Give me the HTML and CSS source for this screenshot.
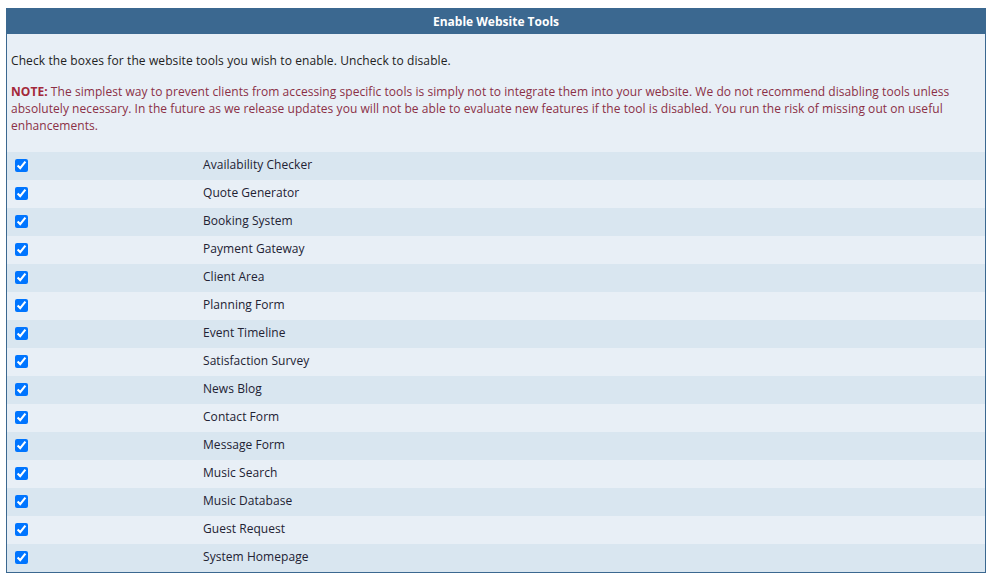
FILE: index.html
```html
<!DOCTYPE html>
<html>
<head>
<meta charset="utf-8">
<link rel="stylesheet" href="styles.css">
</head>
<body>
<div class="panel">
  <div class="panel-head">Enable Website Tools</div>
  <div class="panel-body">
    <p class="intro">Check the boxes for the website tools you wish to enable. Uncheck to disable.</p>
    <p class="note"><b>NOTE:</b> The simplest way to prevent clients from accessing specific tools is simply not to integrate them into your website. We do not recommend disabling tools unless absolutely necessary. In the future as we release updates you will not be able to evaluate new features if the tool is disabled. You run the risk of missing out on useful enhancements.</p>
  </div>
  <div class="tools">
    <label class="row"><span class="cb"><input type="checkbox" checked></span><span class="name">Availability Checker</span></label>
    <label class="row"><span class="cb"><input type="checkbox" checked></span><span class="name">Quote Generator</span></label>
    <label class="row"><span class="cb"><input type="checkbox" checked></span><span class="name">Booking System</span></label>
    <label class="row"><span class="cb"><input type="checkbox" checked></span><span class="name">Payment Gateway</span></label>
    <label class="row"><span class="cb"><input type="checkbox" checked></span><span class="name">Client Area</span></label>
    <label class="row"><span class="cb"><input type="checkbox" checked></span><span class="name">Planning Form</span></label>
    <label class="row"><span class="cb"><input type="checkbox" checked></span><span class="name">Event Timeline</span></label>
    <label class="row"><span class="cb"><input type="checkbox" checked></span><span class="name">Satisfaction Survey</span></label>
    <label class="row"><span class="cb"><input type="checkbox" checked></span><span class="name">News Blog</span></label>
    <label class="row"><span class="cb"><input type="checkbox" checked></span><span class="name">Contact Form</span></label>
    <label class="row"><span class="cb"><input type="checkbox" checked></span><span class="name">Message Form</span></label>
    <label class="row"><span class="cb"><input type="checkbox" checked></span><span class="name">Music Search</span></label>
    <label class="row"><span class="cb"><input type="checkbox" checked></span><span class="name">Music Database</span></label>
    <label class="row"><span class="cb"><input type="checkbox" checked></span><span class="name">Guest Request</span></label>
    <label class="row"><span class="cb"><input type="checkbox" checked></span><span class="name">System Homepage</span></label>
  </div>
</div>
</body>
</html>
```
FILE: styles.css
```css
html, body {
  background: #ffffff;
}
body {
  margin: 8px 5px 0 6px;
  font-family: "Open Sans", "Liberation Sans", sans-serif;
  font-size: 12px;
  color: #222222;
}
.panel {
  border: 1px solid #3b6890;
  background: #e8eff6;
}
.panel-head {
  background: #3b6890;
  color: #ffffff;
  font-weight: bold;
  text-align: center;
  height: 25px;
  line-height: 26px;
}
.panel-body {
  padding: 18px 4px 18px 4px;
}
.panel-body p {
  margin: 0;
  line-height: 17px;
}
.intro {
  color: #222222;
  letter-spacing: 0.1px;
}
.note {
  margin-top: 14px !important;
  color: #8b3046;
  letter-spacing: 0.055px;
}
.note b {
  color: #a3283a;
}
.tools {
  display: flex;
  flex-direction: column;
}
.row {
  display: flex;
  align-items: center;
  height: 28px;
  background: #e8eff6;
}
.row:nth-child(odd) {
  background: #d9e6f0;
}
.cb {
  width: 192px;
  padding-left: 4px;
  padding-bottom: 2px;
  display: flex;
  align-items: center;
}
.cb input {
  margin: 0 0 0 4px;
  width: 13px;
  height: 13px;
}
.name {
  color: #222233;
  letter-spacing: 0.05px;
  padding-bottom: 4px;
}
```
